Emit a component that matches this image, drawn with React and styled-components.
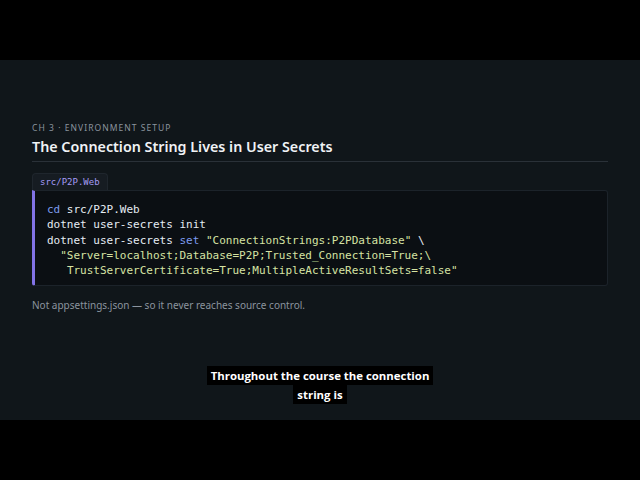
import React from 'react';
import styled, { createGlobalStyle } from 'styled-components';

const Global = createGlobalStyle`
  html, body {
    margin: 0;
    padding: 0;
    background: #000;
  }
`;

const Screen = styled.div`
  width: 640px;
  height: 480px;
  background: #000;
  display: flex;
  flex-direction: column;
  justify-content: center;
`;

const Frame = styled.main`
  position: relative;
  height: 360px;
  box-sizing: border-box;
  background: #10161a;
  padding: 62px 32px 0 32px;
  font-family: "Noto Sans", "Open Sans", sans-serif;
`;

const Eyebrow = styled.div`
  font-size: 8.5px;
  letter-spacing: 1.05px;
  color: #8b949e;
  text-transform: uppercase;
  line-height: 12px;
`;

const Title = styled.h1`
  margin: 3px 0 0;
  font-size: 14.3px;
  font-weight: 600;
  color: #f0f3f6;
  line-height: 20px;
  padding-bottom: 4px;
  border-bottom: 1px solid #2a3138;
`;

const FileTag = styled.div`
  display: inline-block;
  margin-top: 11px;
  padding: 2px 7px 2px;
  background: #161c22;
  border: 1px solid #1f262d;
  border-bottom: none;
  border-radius: 4px 4px 0 0;
  font-family: "DejaVu Sans Mono", monospace;
  font-size: 9px;
  line-height: 12px;
  color: #a49bf5;
`;

const CodeBlock = styled.pre`
  margin: 0;
  padding: 11px 12px 7px;
  background: #0b0f13;
  border: 1px solid #1c232a;
  border-left: 3px solid #8273e6;
  border-radius: 0 3px 3px 3px;
  font-family: "DejaVu Sans Mono", monospace;
  font-size: 11px;
  line-height: 15.3px;
  color: #e6edf3;
`;

const Kw = styled.span`
  color: ${p => p.$tone === 'str' ? '#d6e3a3' : '#7d9cf0'};
`;

const Note = styled.p`
  margin: 12px 0 0;
  font-size: 10px;
  line-height: 14px;
  color: #8b949e;
`;

const Caption = styled.div`
  position: absolute;
  left: 0;
  right: 0;
  top: 306px;
  display: flex;
  flex-direction: column;
  align-items: center;
`;

const CaptionLine = styled.span`
  background: #000;
  color: #fff;
  font-family: "Open Sans", "Noto Sans", sans-serif;
  font-weight: 700;
  font-size: 11.4px;
  line-height: 19px;
  padding: 0 4px;
`;

export default function App() {
  return (
    <Screen>
      <Global />
      <Frame>
        <Eyebrow>CH 3 · Environment Setup</Eyebrow>
        <Title>The Connection String Lives in User Secrets</Title>
        <FileTag>src/P2P.Web</FileTag>
        <CodeBlock>
          <Kw>cd</Kw> src/P2P.Web{'\n'}
          dotnet user-secrets init{'\n'}
          dotnet user-secrets <Kw>set</Kw> <Kw $tone="str">"ConnectionStrings:P2PDatabase"</Kw> \{'\n'}
          {'  '}<Kw $tone="str">"Server=localhost;Database=P2P;Trusted_Connection=True;\</Kw>{'\n'}
          <Kw $tone="str">{'   '}TrustServerCertificate=True;MultipleActiveResultSets=false"</Kw>
        </CodeBlock>
        <Note>Not appsettings.json — so it never reaches source control.</Note>
        <Caption>
          <CaptionLine>Throughout the course the connection</CaptionLine>
          <CaptionLine>string is</CaptionLine>
        </Caption>
      </Frame>
    </Screen>
  );
}
